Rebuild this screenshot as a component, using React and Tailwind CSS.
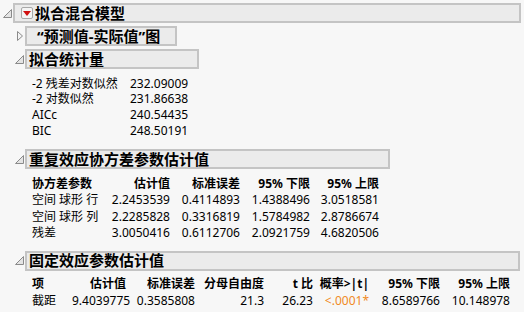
import React from 'react';

const font = { fontFamily: '"Noto Sans", "Noto Sans CJK SC", sans-serif' };

function OpenTri() {
  return (
    <svg width="9" height="9" viewBox="0 0 9 9" className="shrink-0">
      <path d="M0.5 8.5 L8.5 8.5 L8.5 0.5 Z" fill="#e4e4e4" stroke="#8a8a8a" strokeWidth="1" />
    </svg>
  );
}

function ClosedTri() {
  return (
    <svg width="6" height="10" viewBox="0 0 6 10" className="shrink-0">
      <path d="M0.5 0.5 L5.5 5 L0.5 9.5 Z" fill="#f4f4f4" stroke="#8a8a8a" strokeWidth="1" />
    </svg>
  );
}

function Header({ children, className }) {
  return (
    <div className={`h-[20px] flex items-center bg-[#ebebeb] border-2 border-[#c4c4c4] font-bold text-[15px] leading-none text-black ${className}`}>
      {children}
    </div>
  );
}

const stats = [
  ['-2 残差对数似然', '232.09009'],
  ['-2 对数似然', '231.86638'],
  ['AICc', '240.54435'],
  ['BIC', '248.50191'],
];

const cov = [
  ['空间 球形 行', '2.2453539', '0.4114893', '1.4388496', '3.0518581'],
  ['空间 球形 列', '2.2285828', '0.3316819', '1.5784982', '2.8786674'],
  ['残差', '3.0050416', '0.6112706', '2.0921759', '4.6820506'],
];

export default function App() {
  return (
    <div className="w-[524px] h-[312px] bg-[#f7f7f7] overflow-hidden text-[12px] text-black" style={font}>
      {/* top level */}
      <div className="flex items-center pt-[3px] pl-[3px]">
        <div className="w-[10px] flex justify-start"><OpenTri /></div>
        <Header className="w-[508px] pl-[6px] gap-[2px]">
          <span className="w-[12px] h-[12px] border border-[#a8a8a8] bg-[#f4f4f4] rounded-[2px] flex items-center justify-center">
            <svg width="8" height="5" viewBox="0 0 8 5"><path d="M0 0 L8 0 L4 5 Z" fill="#d01010" /></svg>
          </span>
          <span>拟合混合模型</span>
        </Header>
      </div>

      <div className="pl-[15px]">
        <div className="flex items-center mt-[3px]">
          <div className="w-[10px] pl-[2px]"><ClosedTri /></div>
          <Header className="w-[152px] pl-[10px]">“预测值-实际值”图</Header>
        </div>

        <div className="flex items-center mt-[3px]">
          <div className="w-[10px]"><OpenTri /></div>
          <Header className="w-[174px] pl-[2px]">拟合统计量</Header>
        </div>

        <div className="pl-[17px] pt-[7px]">
          {stats.map(([k, v]) => (
            <div key={k} className="flex h-[15.6px] items-center">
              <span className="w-[98px]">{k}</span>
              <span>{v}</span>
            </div>
          ))}
        </div>

        <div className="flex items-center mt-[11px]">
          <div className="w-[10px]"><OpenTri /></div>
          <Header className="w-[365px] pl-[2px]">重复效应协方差参数估计值</Header>
        </div>

        <div className="pl-[17px] pt-[6px]">
          <div className="flex h-[17px] items-center font-bold">
            <span className="w-[78px]">协方差参数</span>
            <span className="w-[60px] text-right">估计值</span>
            <span className="w-[70px] text-right">标准误差</span>
            <span className="w-[70px] text-right">95% 下限</span>
            <span className="w-[69px] text-right">95% 上限</span>
          </div>
          {cov.map((r) => (
            <div key={r[0]} className="flex h-[16.2px] items-center">
              <span className="w-[78px]">{r[0]}</span>
              <span className="w-[60px] text-right">{r[1]}</span>
              <span className="w-[70px] text-right">{r[2]}</span>
              <span className="w-[70px] text-right">{r[3]}</span>
              <span className="w-[69px] text-right">{r[4]}</span>
            </div>
          ))}
        </div>

        <div className="flex items-center mt-[10px]">
          <div className="w-[10px]"><OpenTri /></div>
          <Header className="w-[495px] pl-[2px]">固定效应参数估计值</Header>
        </div>

        <div className="pl-[17px] pt-[5px]">
          <div className="flex h-[17px] items-center font-bold">
            <span className="w-[40px]">项</span>
            <span className="w-[54px] text-right">估计值</span>
            <span className="w-[69px] text-right">标准误差</span>
            <span className="w-[69px] text-right">分母自由度</span>
            <span className="w-[49px] text-right">t 比</span>
            <span className="w-[56px] text-right">概率&gt;|t|</span>
            <span className="w-[71px] text-right">95% 下限</span>
            <span className="w-[70px] text-right">95% 上限</span>
          </div>
          <div className="flex h-[17px] items-center">
            <span className="w-[40px]">截距</span>
            <span className="w-[54px] text-right">9.4039775</span>
            <span className="w-[69px] text-right">0.3585808</span>
            <span className="w-[69px] text-right">21.3</span>
            <span className="w-[49px] text-right">26.23</span>
            <span className="w-[56px] text-right text-[#f08a24]">&lt;.0001*</span>
            <span className="w-[71px] text-right">8.6589766</span>
            <span className="w-[70px] text-right">10.148978</span>
          </div>
        </div>
      </div>
    </div>
  );
}
